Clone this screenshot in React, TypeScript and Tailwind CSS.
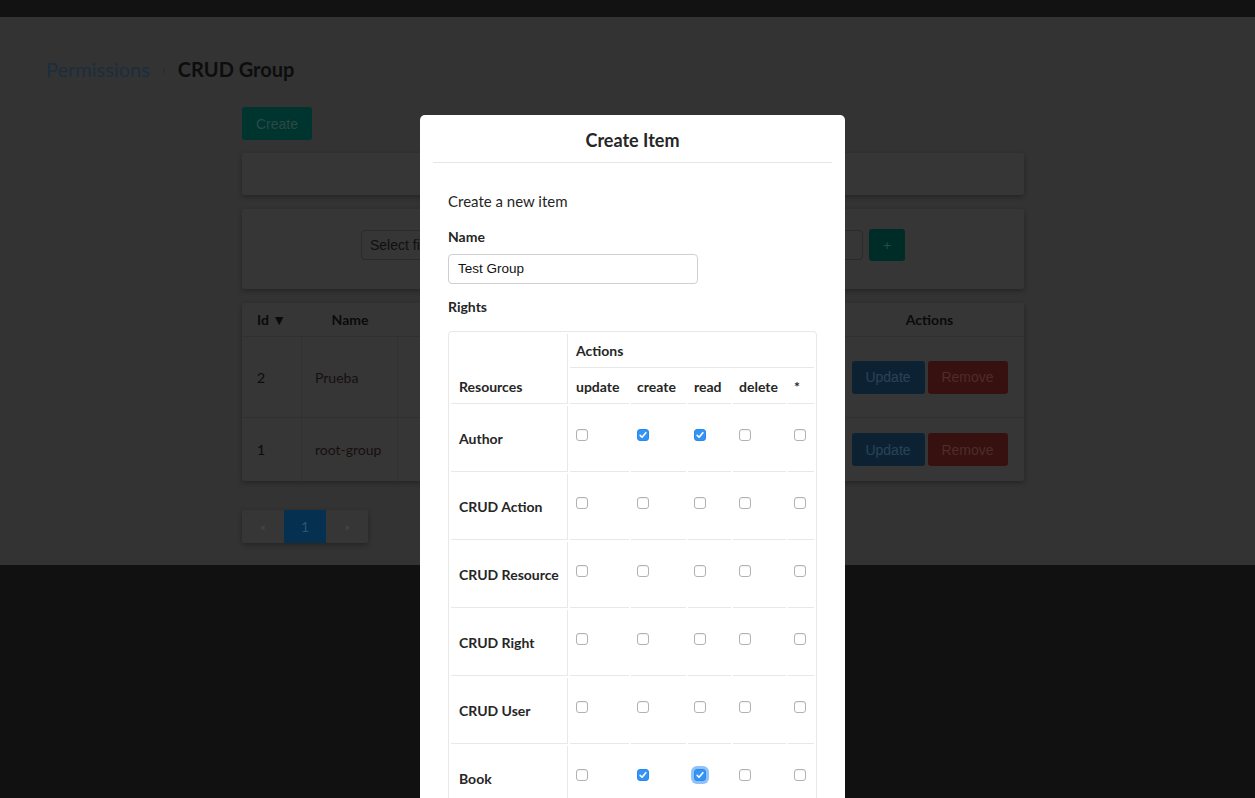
import clsx from 'clsx';

const lato = "font-['Lato',sans-serif]";
const arial = "font-['Liberation_Sans',Arial,sans-serif]";

const actions = ['update', 'create', 'read', 'delete', '*'];

const rights: { name: string; on: number[]; focus?: number }[] = [
  { name: 'Author', on: [1, 2] },
  { name: 'CRUD Action', on: [] },
  { name: 'CRUD Resource', on: [] },
  { name: 'CRUD Right', on: [] },
  { name: 'CRUD User', on: [] },
  { name: 'Book', on: [1, 2], focus: 2 },
];

function Check({ on, focus }: { on?: boolean; focus?: boolean }) {
  return (
    <span
      className={clsx(
        'mb-[8px] inline-flex h-3 w-3 items-center justify-center rounded-[3px] border',
        on ? 'border-[#2d88ec] bg-[#3494f6]' : 'border-[#b2b2b2] bg-white shadow-[inset_0_1px_1px_rgba(0,0,0,0.06)]',
        focus && 'ring-[3px] ring-[#8fc2f9]',
      )}
    >
      {on && (
        <svg viewBox="0 0 12 12" className="h-[10px] w-[10px]">
          <path d="M2.6 6.4 L4.9 8.7 L9.4 3.2" fill="none" stroke="white" strokeWidth="1.9" strokeLinecap="round" strokeLinejoin="round" />
        </svg>
      )}
    </span>
  );
}

// the page behind the modal, already dimmed by the backdrop
function Page() {
  return (
    <div className={clsx('flex h-screen flex-col overflow-hidden bg-[#111]', lato)}>
      <div className="h-[17px] bg-[#121212]" />
      <div className="h-[548px] bg-[#333]">
        <div className="flex items-center gap-[12px] pl-[46px] pt-[38px] text-xl leading-7">
          <span className="text-[#1c2d3e]">Permissions</span>
          <span className="text-sm text-[#2a2a2a]">›</span>
          <span className="font-bold text-[#0d0d0d]">CRUD Group</span>
        </div>
        <div className="ml-[242px] w-[782px]">
          <button className={clsx('mt-[24px] h-[33px] w-[70px] rounded-[3px] bg-[#00352f] text-sm text-[#2e4845]', arial)}>
            Create
          </button>
          <div className="mt-[13px] h-[42px] rounded-[2px] bg-[#363636] shadow-[0_2px_5px_rgba(0,0,0,0.3)]" />
          <div className="mt-[14px] flex h-[80px] items-start justify-center gap-[6px] rounded-[2px] bg-[#363636] pt-[21px] shadow-[0_2px_5px_rgba(0,0,0,0.3)]">
            <div className={clsx('flex h-[30px] w-[150px] items-center rounded-[4px] border border-[#2b2b2b] pl-2 text-sm text-[#0f0f0f]', arial)}>
              Select field
            </div>
            <div className="h-[30px] w-[346px] rounded-[4px] border border-[#2b2b2b]" />
            <button className="-mt-px h-[32px] w-[36px] rounded-[3px] bg-[#002c27] text-sm text-[#2a4a46]">+</button>
          </div>
          <div className="mt-[14px] rounded-[2px] bg-[#363636] text-sm shadow-[0_2px_5px_rgba(0,0,0,0.3)]">
            <div className="flex h-[34px] items-center border-b border-[#303030] font-bold text-[#0a0a0a]">
              <div className="w-[60px] pl-[15px]">Id ▼</div>
              <div className="w-[96px] text-center">Name</div>
              <div className="flex-1" />
              <div className="w-[189px] text-center">Actions</div>
            </div>
            {[
              { id: '2', name: 'Prueba', h: 'h-[81px] border-b border-[#303030]' },
              { id: '1', name: 'root-group', h: 'h-[63px]' },
            ].map((r) => (
              <div key={r.id} className={clsx('flex items-center text-[#0d0b0b]', r.h)}>
                <div className="flex h-full w-[60px] items-center border-r border-[#313131] pl-[15px] pt-px">{r.id}</div>
                <div className="flex h-full w-[96px] items-center border-r border-[#313131] pl-[13px] pt-px text-[#171010]">{r.name}</div>
                <div className="flex-1" />
                <div className={clsx('flex w-[189px] justify-center gap-[3px] text-sm', arial)}>
                  <button className="h-[33px] w-[73px] rounded-[3px] bg-[#0c2233] text-[#2a4356]">Update</button>
                  <button className="h-[33px] w-[80px] rounded-[3px] bg-[#36110f] text-[#4e2c29]">Remove</button>
                </div>
              </div>
            ))}
          </div>
          <div className="mt-[29px] flex h-[33px] w-[126px] rounded-[2px] bg-[#363636] text-xs shadow-[0_2px_5px_rgba(0,0,0,0.3)]">
            <span className="flex w-[42px] items-center justify-center text-[#4a4a4a]">«</span>
            <span className="flex w-[42px] items-center justify-center bg-[#05304f] text-sm text-[#2c5473]">1</span>
            <span className="flex w-[42px] items-center justify-center text-[#4a4a4a]">»</span>
          </div>
        </div>
      </div>
    </div>
  );
}

function Modal() {
  return (
    <div className={clsx('fixed left-[420px] top-[115px] z-20 h-[700px] w-[425px] rounded-t-[5px] bg-white text-[#262626]', lato)}>
      <div className="mx-[13px] flex h-[48px] items-center justify-center border-b border-[#e6e6e6] pt-[2px]">
        <h2 className="text-lg font-bold">Create Item</h2>
      </div>
      <div className="px-[28px]">
        <p className="mt-[28px] text-[15px] leading-[20px]">Create a new item</p>
        <div className="mt-[17px] text-sm font-bold leading-[17px]">Name</div>
        <div
          className={clsx(
            'mt-[9px] flex h-[30px] w-[250px] items-center rounded-[4px] border border-[#cfcfcf] pl-[9px] text-[13.5px] text-[#111]',
            arial,
          )}
        >
          Test Group
        </div>
        <div className="mt-[14px] text-sm font-bold leading-[17px]">Rights</div>
        <table className="mt-[16px] w-full table-fixed border-separate border-spacing-[2px] rounded-[4px] border border-[#e8e8e8] text-sm leading-[17px]">
          <colgroup>
            <col className="w-[117px]" />
            <col className="w-[59px]" />
            <col className="w-[55px]" />
            <col className="w-[43px]" />
            <col className="w-[53px]" />
            <col />
          </colgroup>
          <thead>
            <tr>
              <th rowSpan={2} className="whitespace-nowrap border-b border-r border-[#e8e8e8] px-2 pb-2 text-left align-bottom font-bold">
                Resources
              </th>
              <th colSpan={5} className="h-[34px] border-b border-[#e8e8e8] pb-2 pl-[6px] pr-2 text-left align-bottom font-bold">
                Actions
              </th>
            </tr>
            <tr>
              {actions.map((a) => (
                <th key={a} className="h-[34px] border-b border-[#e8e8e8] pb-2 pl-[6px] pr-[7px] text-left align-bottom font-bold">
                  {a}
                </th>
              ))}
            </tr>
          </thead>
          <tbody>
            {rights.map((r) => (
              <tr key={r.name}>
                <td className="h-[66px] whitespace-nowrap border-b border-r border-[#e8e8e8] pl-2 pr-1 align-middle font-bold">
                  {r.name}
                </td>
                {actions.map((a, i) => (
                  <td key={a} className="h-[66px] border-b border-[#e8e8e8] pl-[6px] pr-[7px] align-middle">
                    <div className="flex items-center">
                      <Check on={r.on.includes(i)} focus={r.focus === i} />
                    </div>
                  </td>
                ))}
              </tr>
            ))}
          </tbody>
        </table>
      </div>
    </div>
  );
}

export default function App() {
  return (
    <div className="relative">
      <Page />
      <Modal />
    </div>
  );
}
